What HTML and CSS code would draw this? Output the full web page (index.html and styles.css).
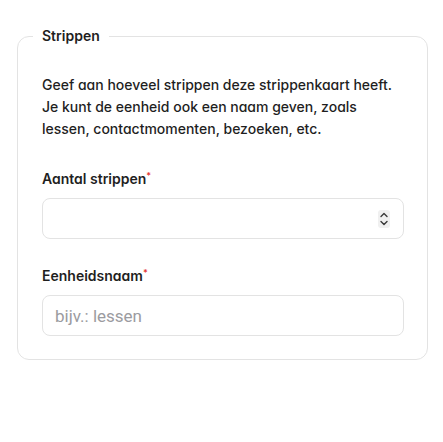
FILE: index.html
```html
<!DOCTYPE html>
<html lang="nl">
<head>
<meta charset="utf-8">
<link rel="stylesheet" href="styles.css">
</head>
<body>
<form class="page">
  <fieldset class="card">
    <legend class="legend">Strippen</legend>
    <p class="intro">Geef aan hoeveel strippen deze strippenkaart heeft. Je kunt de eenheid ook een naam geven, zoals lessen, contactmomenten, bezoeken, etc.</p>
    <div class="field">
      <label class="label">Aantal strippen<span class="req">*</span></label>
      <div class="input input-number">
        <span class="spinner">
          <svg width="10" height="16" viewBox="0 0 10 16" fill="none" stroke="#3a3a3a" stroke-width="1.4" stroke-linecap="round" stroke-linejoin="round"><path d="M2 5.5 L5 2.5 L8 5.5"/><path d="M2 10.5 L5 13.5 L8 10.5"/></svg>
        </span>
      </div>
    </div>
    <div class="field">
      <label class="label">Eenheidsnaam<span class="req">*</span></label>
      <div class="input"><span class="placeholder">bijv.: lessen</span></div>
    </div>
  </fieldset>
</form>
</body>
</html>
```
FILE: styles.css
```css
html, body { margin: 0; padding: 0; background: #fff; }
body { font-family: Inter, "Noto Sans", sans-serif; font-feature-settings: "cv11"; color: #1f1f1f; }
.page { padding: 26px 15px 0 17px; }
.card {
  margin: 0;
  border: 1px solid #e3e3e3;
  border-radius: 12px;
  padding: 14px 23px 23px 24px;
  min-width: 0;
}
.legend {
  font-size: 14px;
  font-weight: 600;
  padding: 0 9px;
  margin-left: -9px;
  line-height: 20px;
}
.intro {
  margin: 14px 0 0;
  font-size: 14px;
  line-height: 22px;
  font-weight: 500;
}
.field { margin-top: 29px; }
.field + .field { margin-top: 27px; }
.label { display: block; font-size: 14px; font-weight: 600; line-height: 20px; }
.req { color: #e53935; font-size: 9px; vertical-align: top; position: relative; top: -3px; }
.input {
  margin-top: 9px;
  height: 41px;
  box-sizing: border-box;
  border: 1px solid #e3e3e3;
  border-radius: 8px;
  display: flex;
  align-items: center;
  padding: 0 12px;
}
.input-number { justify-content: flex-end; padding-right: 13px; }
.spinner {
  width: 12px; height: 18px;
  background: #f0f0f0;
  border-radius: 3px;
  display: flex; align-items: center; justify-content: center;
}
.placeholder { font-family: Roboto, sans-serif; font-size: 17px; color: #9b9ba0; }
```
